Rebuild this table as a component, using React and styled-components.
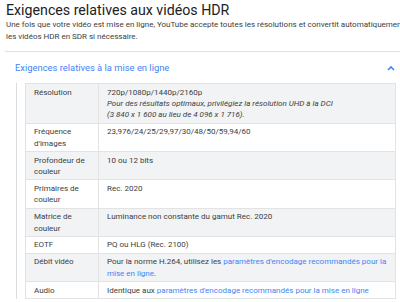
import styled, { createGlobalStyle } from "styled-components";

const GlobalStyle = createGlobalStyle`
    html, body {
        margin: 0;
        padding: 0;
        background: #ffffff;
        overflow: hidden;
    }
    body {
        font-family: Roboto, "Liberation Sans", Arial, sans-serif;
        color: #3c4043;
    }
`;

const Page = styled.div`
    width: 400px;
    height: 302px;
    padding-left: 6px;
    box-sizing: border-box;
    overflow: hidden;
`;

const Title = styled.h1`
    margin: 0;
    padding-top: 1px;
    font-size: 14.2px;
    line-height: 18px;
    font-weight: 400;
    color: #202124;
    white-space: nowrap;
`;

const Intro = styled.p`
    margin: 0;
    font-size: 8px;
    line-height: 12px;
    color: #3c4043;
    white-space: nowrap;
`;

const Divider = styled.hr`
    margin: 8px 0 0 -1px;
    border: 0;
    border-top: 1px solid #e0e0e0;
`;

const SectionHeader = styled.div`
    display: flex;
    align-items: center;
    justify-content: space-between;
    height: 31px;
    padding: 0 5px 0 9px;
    font-size: 9.4px;
    color: #4285f4;
`;

const SectionBody = styled.div`
    margin-left: 10px;
    border-left: 1px solid #dadce0;
    padding: 0 0 0 8px;
    width: 371px;
`;

const Table = styled.table`
    width: 100%;
    border-collapse: collapse;
    font-size: 8px;
    line-height: 11.4px;
    color: #3c4043;
`;

const Row = styled.tr`
    background: ${(p) => (p.$shaded ? "#f1f3f4" : "#ffffff")};
`;

const Cell = styled.td`
    vertical-align: top;
    padding: 2.5px 8px 2px;
    border: 1px solid #e3e3e3;
    width: ${(p) => (p.$label ? "56px" : "auto")};
    white-space: ${(p) => (p.$label ? "normal" : "nowrap")};
`;

const Note = styled.span`
    font-style: italic;
`;

const Link = styled.a`
    color: #4285f4;
    text-decoration: none;
`;

const Chevron = () => (
    <svg width="8" height="6" viewBox="0 0 8 6" aria-hidden="true">
        <path d="M1 5 L4 2 L7 5" fill="none" stroke="#4285f4" strokeWidth="1.6" />
    </svg>
);

const rows = [
    {
        label: "Résolution",
        value: (
            <>
                720p/1080p/1440p/2160p
                <br />
                <Note>
                    Pour des résultats optimaux, privilégiez la résolution UHD à la DCI
                    <br />
                    (3 840 x 1 600 au lieu de 4 096 x 1 716).
                </Note>
            </>
        ),
    },
    { label: <>Fréquence<br />d'images</>, value: "23,976/24/25/29,97/30/48/50/59,94/60" },
    { label: <>Profondeur de<br />couleur</>, value: "10 ou 12 bits" },
    { label: <>Primaires de<br />couleur</>, value: "Rec. 2020" },
    { label: <>Matrice de<br />couleur</>, value: "Luminance non constante du gamut Rec. 2020" },
    { label: "EOTF", value: "PQ ou HLG (Rec. 2100)" },
    {
        label: "Débit vidéo",
        value: (
            <>
                Pour la norme H.264, utilisez les{" "}
                <Link href="#">paramètres d'encodage recommandés pour la</Link>
                <br />
                <Link href="#">mise en ligne</Link>.
            </>
        ),
    },
    {
        label: "Audio",
        value: (
            <>
                Identique aux <Link href="#">paramètres d'encodage recommandés pour la mise en ligne</Link>
            </>
        ),
    },
];

export default function App() {
    return (
        <>
            <GlobalStyle />
            <Page>
                <Title>Exigences relatives aux vidéos HDR</Title>
                <Intro>
                    Une fois que votre vidéo est mise en ligne, YouTube accepte toutes les résolutions et convertit automatiquement
                    <br />
                    les vidéos HDR en SDR si nécessaire.
                </Intro>
                <Divider />
                <SectionHeader>
                    <span>Exigences relatives à la mise en ligne</span>
                    <Chevron />
                </SectionHeader>
                <SectionBody>
                    <Table>
                        <tbody>
                            {rows.map((row, i) => (
                                <Row key={i} $shaded={i % 2 === 0}>
                                    <Cell $label>{row.label}</Cell>
                                    <Cell>{row.value}</Cell>
                                </Row>
                            ))}
                        </tbody>
                    </Table>
                </SectionBody>
            </Page>
        </>
    );
}
